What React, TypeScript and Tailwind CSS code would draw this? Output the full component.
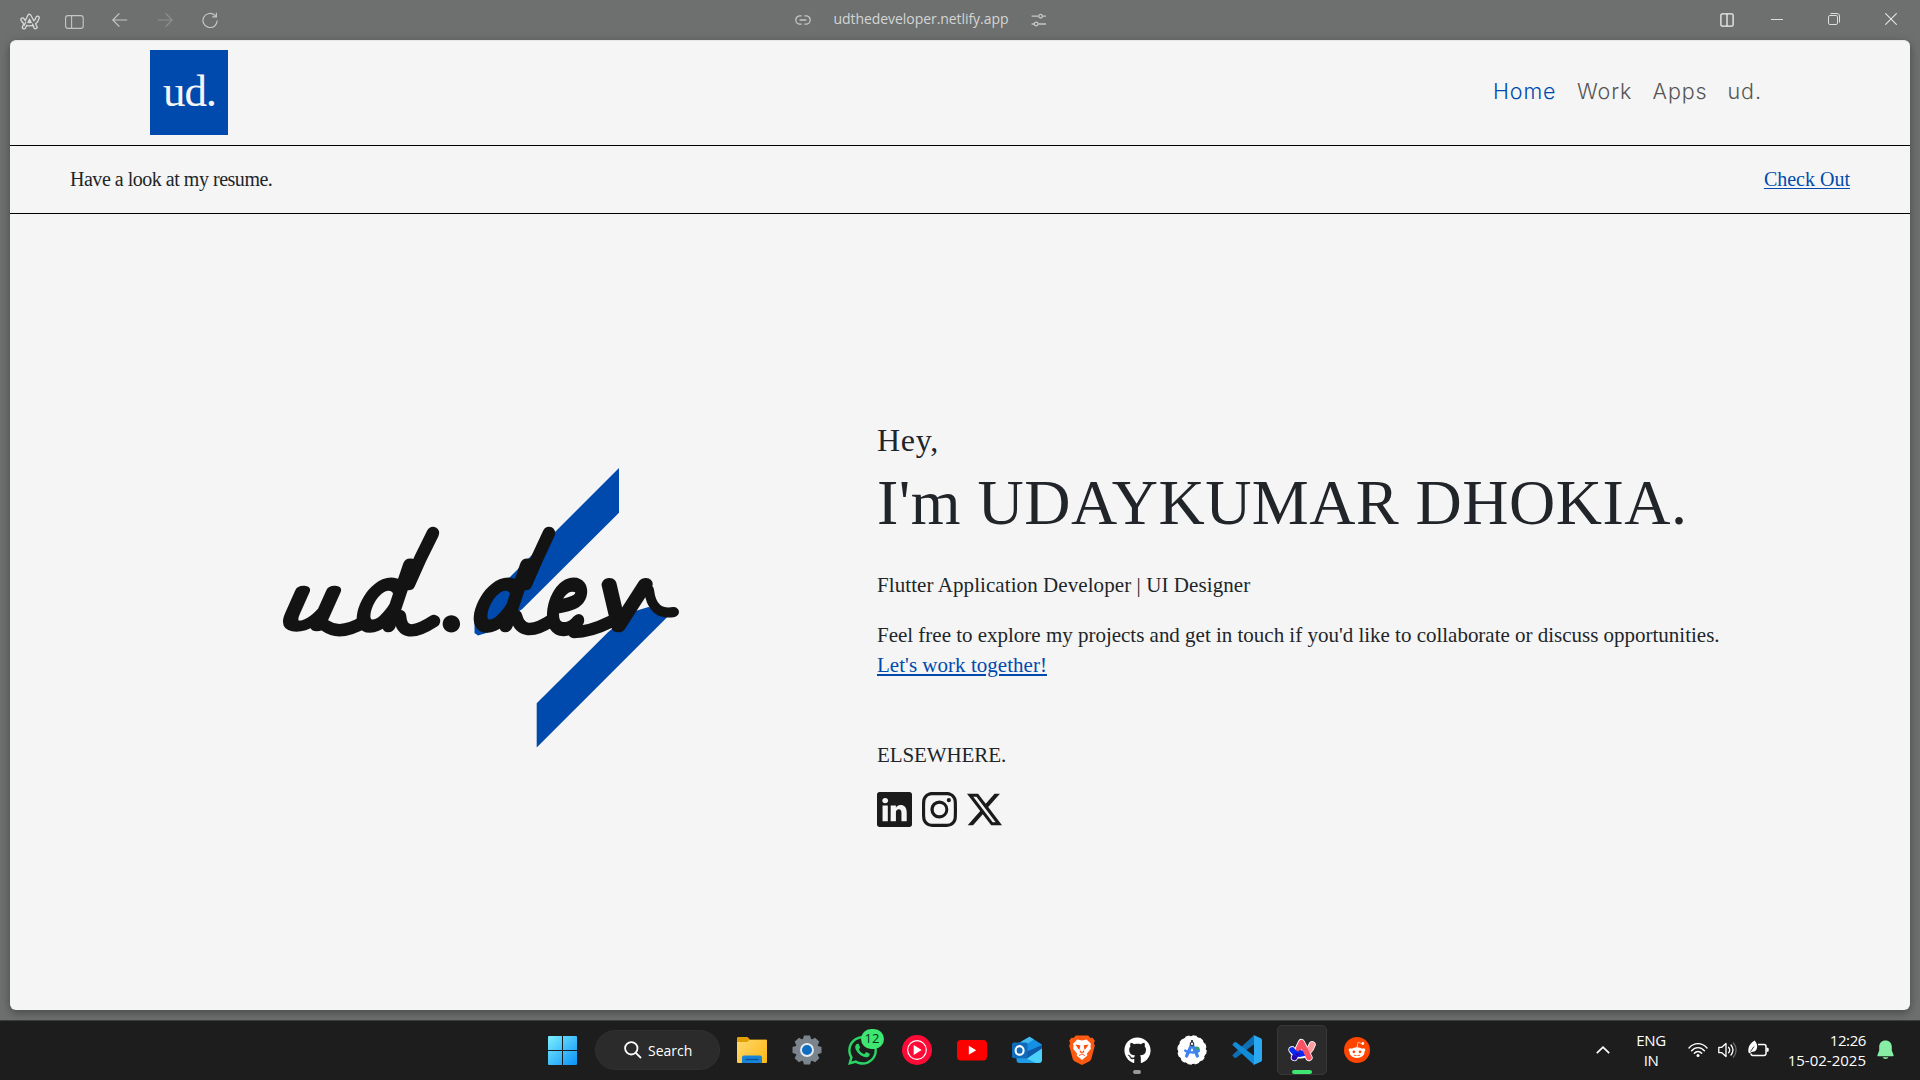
import type { ReactNode } from "react";
import { BsInstagram, BsLinkedin, BsTwitterX } from "react-icons/bs";
import { FaGithub, FaRedditAlien, FaWhatsapp } from "react-icons/fa";

const serif = "font-['Liberation_Serif',serif]";
const ui = "font-['Open_Sans','Noto_Sans',sans-serif]";

/* ---------- browser toolbar ---------- */

function ArcOutline() {
  return (
    <svg viewBox="0 0 20 17" className="h-[17px] w-5">
      <g fill="none" strokeLinecap="round" strokeLinejoin="round">
        <g stroke="#d8d9d8" strokeWidth="4.6">
          <path d="M2.6 6.6C4.6 10.8 10 13 14.6 9.4C16.4 8 17.2 6.4 17.6 4.8" />
          <path d="M4 14.2L9.4 3L15.4 14" />
        </g>
        <g stroke="#6e706f" strokeWidth="2">
          <path d="M2.6 6.6C4.6 10.8 10 13 14.6 9.4C16.4 8 17.2 6.4 17.6 4.8" />
          <path d="M4 14.2L9.4 3L15.4 14" />
        </g>
        <path stroke="#d8d9d8" strokeWidth="1.2" d="M8 9.4l1.5-3l1.4 3zM5.6 9.4l-1.6 3.4M12.4 11l1.4 2.4" />
      </g>
    </svg>
  );
}

function TopBar() {
  return (
    <header className="flex h-10 shrink-0 items-start text-[#c4c6c5]">
      <div className="flex w-[795px] items-start pl-5">
        <div className="w-[45px] pt-[13px]">
          <ArcOutline />
        </div>
        <svg viewBox="0 0 19 14" className="mt-[15px] h-[14px] w-[19px]" fill="none" stroke="currentColor" strokeWidth="1.1">
          <rect x="0.6" y="0.6" width="17.6" height="12.8" rx="2.4" />
          <path d="M6.6 0.6V13.4" />
        </svg>
        <svg viewBox="0 0 16 14" className="mt-[13px] ml-7 h-[14px] w-4" fill="none" stroke="currentColor" strokeWidth="1.2">
          <path d="M15.2 7H0.8M7.4 0.4L0.8 7L7.4 13.6" />
        </svg>
        <svg viewBox="0 0 16 14" className="mt-[13px] ml-[29px] h-[14px] w-4 text-[#8f9190]" fill="none" stroke="currentColor" strokeWidth="1.2">
          <path d="M0.8 7H15.2M8.6 0.4L15.2 7L8.6 13.6" />
        </svg>
        <svg viewBox="0 0 16 16" className="mt-3 ml-[29px] size-4" fill="none" stroke="currentColor" strokeWidth="1.2">
          <path d="M15.2 8.6A7.1 7.1 0 1 1 13 3.4L14.4 4.8M14.4 0.8V4.9H10.2" />
        </svg>
      </div>
      <div className="flex items-start">
        <svg viewBox="0 0 16 10" className="mt-[15px] h-[10px] w-4" fill="none" stroke="currentColor" strokeWidth="1.3">
          <path d="M6.6 0.8H5a4.2 4.2 0 0 0 0 8.4h1.6M9.4 0.8H11a4.2 4.2 0 0 1 0 8.4H9.4M4.6 5h6.8" />
        </svg>
        <span className={`${ui} mt-[9px] ml-[22.5px] w-[175px] whitespace-nowrap text-[14px] leading-[20px] tracking-[-0.06px] text-[#d3d5d4]`}>
          udthedeveloper.netlify.app
        </span>
        <svg viewBox="0 0 16 14" className="mt-[13px] ml-[22.5px] h-[14px] w-4" fill="none" stroke="currentColor" strokeWidth="1.3">
          <path d="M0.6 3.2h7M11.6 3.2H15M0.6 11h2.6M7.2 11H15" />
          <circle cx="9.6" cy="3.2" r="1.8" />
          <circle cx="5.2" cy="11" r="1.8" />
        </svg>
      </div>
      <div className="flex flex-1 items-start justify-end pr-[23px]">
        <svg viewBox="0 0 14 14" className="mt-[13px] size-[14px] text-[#f0f0f0]" fill="none" stroke="currentColor" strokeWidth="1.3">
          <rect x="0.9" y="0.9" width="12.2" height="12.2" rx="1.4" />
          <path d="M7 1v12" />
        </svg>
        <div className="mt-[19px] ml-[37px] h-px w-3 bg-[#dcdddc]" />
        <svg viewBox="0 0 12 12" className="mt-[13px] ml-[45px] size-3" fill="none" stroke="#dcdddc" strokeWidth="1">
          <rect x="0.5" y="2.5" width="9" height="9" rx="1.4" />
          <path d="M2.5 0.5H9a2.5 2.5 0 0 1 2.5 2.5V9.5" />
        </svg>
        <svg viewBox="0 0 12 12" className="mt-[13px] ml-[45px] size-3" fill="none" stroke="#e4e5e4" strokeWidth="1.1">
          <path d="M0.3 0.3L11.7 11.7M11.7 0.3L0.3 11.7" />
        </svg>
      </div>
    </header>
  );
}

/* ---------- web page ---------- */

function SiteNav() {
  return (
    <div className="flex h-[105px] shrink-0 items-start justify-between border-b border-black pt-[9px] pr-[145px] pl-[140px]">
      <div className={`${serif} flex h-[85px] w-[78px] items-center bg-[#004aad] pl-[13px] text-[45px] leading-[85px] tracking-[-1.1px] text-[#f5f5f5]`}>
        <span className="-mt-[3px]">ud.</span>
      </div>
      <nav className="mt-[26px] flex font-['Inter',sans-serif] text-[21.5px] leading-[31px] font-[350] tracking-[0.9px] text-[#555555]">
        <a className="w-[84px] text-[#004aad]">Home</a>
        <a className="w-[75.5px]">Work</a>
        <a className="w-[75px]">Apps</a>
        <a className="w-[37.5px]">ud.</a>
      </nav>
    </div>
  );
}

function BrandMark() {
  return (
    <svg viewBox="0 0 440 320" className="mt-[226px] ml-[250px] h-[320px] w-[440px] shrink-0">
      <g fill="#004aad">
        <path d="M359 28V72.7L262 169.3L248 178L236 190L218 195.6L214.5 193V172.5Z" />
        <path d="M276.7 263.3L348 192.3L372 172L388.5 167L409.3 175L276.7 307.4Z" />
      </g>
      <g
        fill="#131313"
        stroke="#131313"
        strokeWidth="12.5"
        strokeLinejoin="round"
        strokeLinecap="round"
        fontFamily="Lato, sans-serif"
        fontStyle="italic"
        fontWeight="100"
        fontSize="85"
      >
        <text transform="translate(22 186) skewX(-16) scale(1.12 0.84)">u</text>
        <text transform="translate(97 186) skewX(-12)">d</text>
        <text x="184.5" y="189" fontWeight="700" fontSize="75" strokeWidth="6">.</text>
        <text transform="translate(214 186) skewX(-12)">d</text>
        <text transform="translate(288 189) skewX(-4) scale(0.9 1.06)">e</text>
        <text transform="translate(341 186) skewX(-4) scale(1.1 1)">v</text>
        {/* swashes that tie the signature together */}
        <g fill="none">
          <path d="M66 186Q80 196 104 182" />
          <path d="M149 144Q160 118 173 93" />
          <path d="M140 176Q142 202 174 181" />
          <path d="M266 144Q277 118 289 93" />
          <path d="M256 176Q262 200 292 180" />
          <path d="M314 192Q330 192 350 182" />
          <path strokeWidth="10" d="M389 150Q392 176 414 172" />
        </g>
      </g>
    </svg>
  );
}

function Hero() {
  return (
    <main className="flex flex-1 items-start">
      <BrandMark />
      <section className={`${serif} mt-[207px] ml-[177px] text-[21px] leading-[30px] text-[#212529]`}>
        <p className="text-[32px] leading-[38px] tracking-[0.7px]">Hey,</p>
        <h1 className="mt-[5px] text-[64px] leading-[77px] tracking-[0.48px] whitespace-nowrap">I'm UDAYKUMAR DHOKIA.</h1>
        <p className="mt-[29px] tracking-[0.08px]">Flutter Application Developer | UI Designer</p>
        <p className="mt-5 whitespace-nowrap tracking-[-0.01px]">
          Feel free to explore my projects and get in touch if you'd like to collaborate or discuss opportunities.
          <br />
          <a className="tracking-[0.03px] text-[#004aad] underline decoration-2 underline-offset-2">Let's work together!</a>
        </p>
        <p className="mt-[60px] tracking-[-0.1px]">ELSEWHERE.</p>
        <div className="mt-[22px] flex gap-[10px] text-[#1b1b1b]">
          <BsLinkedin size={35} />
          <BsInstagram size={35} />
          <BsTwitterX size={35} />
        </div>
      </section>
    </main>
  );
}

/* ---------- taskbar icons ---------- */

const WindowsIcon = () => (
  <svg viewBox="0 0 29 29" className="size-[29px]">
    <defs>
      <linearGradient id="win" x1="0" y1="0" x2="29" y2="29" gradientUnits="userSpaceOnUse">
        <stop stopColor="#7cf0ff" />
        <stop offset="1" stopColor="#0a90f8" />
      </linearGradient>
    </defs>
    <path fill="url(#win)" d="M0 1a1 1 0 0 1 1-1h13v14H0zM15 0h13a1 1 0 0 1 1 1v13H15zM0 15h14v14H1a1 1 0 0 1-1-1zM15 15h14v13a1 1 0 0 1-1 1H15z" />
  </svg>
);

const FolderIcon = () => (
  <svg viewBox="0 0 30 30" className="size-[30px]">
    <defs>
      <linearGradient id="fold" x1="0" y1="4" x2="30" y2="28" gradientUnits="userSpaceOnUse">
        <stop stopColor="#ffd970" />
        <stop offset="1" stopColor="#fdb813" />
      </linearGradient>
    </defs>
    <path fill="#e0a006" d="M0 3a1 1 0 0 1 1-1h9.5L13 4.6h16a1 1 0 0 1 1 1V12H0z" />
    <path fill="url(#fold)" d="M0 7h10l2.6-2H29a1 1 0 0 1 1 1v21a1 1 0 0 1-1 1H1a1 1 0 0 1-1-1z" />
    <path fill="#1683d8" d="M5 28v-5.500a2 2 0 0 1 2-2h16a2 2 0 0 1 2 2V28z" />
    <path stroke="#0b4f92" strokeWidth="1.3" d="M8.500 24.500h13" />
  </svg>
);

const SettingsIcon = () => (
  <svg viewBox="0 0 30 30" className="size-[30px]">
    <g fill="#7b848c">
      <circle cx="15" cy="15" r="11.500" />
      {[0, 45, 90, 135].map((a) => (
        <path key={a} transform={`rotate(${a} 15 15)`} d="M12 0.500h6l1.600 5v19l-1.600 5h-6l-1.600-5v-19z" />
      ))}
    </g>
    <circle cx="15" cy="15" r="6" fill="#0f6cc0" stroke="#e6ebef" strokeWidth="1.900" />
  </svg>
);

const WhatsAppIcon = () => (
  <div className="relative">
    <FaWhatsapp size={33} color="#2bd565" />
    <span className={`${ui} absolute -top-[5px] left-[15px] flex h-5 w-[23px] items-center justify-center rounded-full bg-[#3ee672] text-[13px] leading-none text-[#10301a]`}>
      12
    </span>
  </div>
);

const YouTubeMusicIcon = () => (
  <svg viewBox="0 0 30 30" className="size-[30px]">
    <circle cx="15" cy="15" r="15" fill="#ff0a36" />
    <circle cx="15" cy="15" r="9.300" fill="none" stroke="#fff" strokeWidth="1.200" />
    <path fill="#fff" d="M11.700 10l8 5l-8 5z" />
  </svg>
);

const YouTubeIcon = () => (
  <svg viewBox="0 0 30 30" className="size-[30px]">
    <rect y="5" width="30" height="20.400" rx="4" fill="#fe0000" />
    <path fill="#fff" d="M11.800 10.700l7.400 4.500l-7.400 4.500z" />
  </svg>
);

const OutlookIcon = () => (
  <svg viewBox="0 0 30 30" className="size-[30px]">
    <path fill="#1590e2" d="M5 9L17.500 1.800L30 9.500V20H5z" />
    <path fill="#42b8ee" d="M9 6.800L17.500 1.800L22 4.600L10 12z" />
    <path fill="#0f57a8" d="M30 10V16L14 24V17z" />
    <path fill="#4bd0fa" d="M30 13.500V25a3 3 0 0 1-3 3H8z" />
    <path fill="#1f9be6" d="M4.500 19L24 28H7.500a3 3 0 0 1-3-3z" />
    <rect y="7.600" width="15.600" height="15.600" rx="2" fill="#0f6cbd" />
    <ellipse cx="7.600" cy="15.400" rx="4" ry="4.300" fill="none" stroke="#fff" strokeWidth="2.100" />
  </svg>
);

const BraveIcon = () => (
  <svg viewBox="0 0 26 30" className="h-[30px] w-[26px]">
    <defs>
      <linearGradient id="brv" x1="0" y1="0" x2="26" y2="0">
        <stop stopColor="#ff5a12" />
        <stop offset="1" stopColor="#ff2208" />
      </linearGradient>
    </defs>
    <path fill="url(#brv)" d="M7 0.500h12l2.600 2.600l2-0.300l2.200 3l-0.900 2.400l0.900 2.600l-3.400 12.600c-0.400 1.400-1.200 2.400-2.400 3.200L13 30l-7-3.400c-1.200-0.800-2-1.800-2.400-3.200L0.200 10.800l0.900-2.600L0.200 5.800l2.200-3l2 0.300z" />
    <path fill="#fff" d="M8.400 4.600L13 5.600l4.600-1L22 8.800l-0.600 2.400l0.600 2.200l-4.200 5.400l0.600 1.600L13 25l-5.400-4.600l0.600-1.600L4 13.400l0.600-2.200L4 8.800z" />
    <path fill="#ff4a12" d="M6.400 9.600l4.600 0.600l0.400 0.600l-0.800 2.600l2.400 4.400l2.400-4.400l-0.800-2.600l0.400-0.600l4.600-0.600l-3 4.400l-2.600 1l1.600 2l-2.600 1.600l-2.600-1.600l1.600-2l-2.600-1z" />
    <path stroke="#ff4a12" strokeWidth="0.900" fill="none" d="M10 20.600l3-1.600l3 1.600" />
  </svg>
);

const AndroidStudioIcon = () => (
  <svg viewBox="0 0 30 30" className="size-[30px]">
    <circle cx="15" cy="15" r="14" fill="#fff" stroke="#fff" strokeWidth="1.500" strokeDasharray="4.400 2.930" />
    <circle cx="19.500" cy="14.800" r="3.300" fill="#34a062" />
    <g fill="none" stroke="#3f82f0" strokeLinecap="round">
      <path strokeWidth="3.200" d="M14.300 10.500L9.600 21M15.700 10.500L20.400 21" />
      <path strokeWidth="2.400" d="M8.200 15.600C11 18 19 18 21.800 15.800" />
    </g>
    <path stroke="#3b4348" strokeWidth="2" d="M15 5v2" />
    <circle cx="15" cy="8.900" r="1.700" fill="#fff" stroke="#3b4348" strokeWidth="1.300" />
  </svg>
);

const VSCodeIcon = () => (
  <svg viewBox="0 0 30 30" className="size-[30px]">
    <path fill="#0e6fb5" d="M22 0.300L1 19.500a1.200 1.200 0 0 0 0 1.800l1.500 1.400a1.300 1.300 0 0 0 1.700 0L23 8.500z" />
    <path fill="#128bd6" d="M22 29.700L1 10.500a1.200 1.200 0 0 1 0-1.800l1.500-1.400a1.300 1.300 0 0 1 1.700 0L23 21.500z" />
    <path fill="#2aa8f2" d="M22.200 0.200l6.600 3A2 2 0 0 1 30 5v20a2 2 0 0 1-1.200 1.800l-6.600 3a1.800 1.800 0 0 1-1.500-0.200c0.800 0.500 1.300 0 1.300-0.900V1.300c0-0.900-0.500-1.400-1.300-0.900a1.800 1.800 0 0 1 1.500-0.200z" />
  </svg>
);

const ArcIcon = () => (
  <svg viewBox="0 0 28 24" className="h-6 w-7">
    <g fill="none" strokeLinecap="round" strokeLinejoin="round">
      <g stroke="#fff" strokeWidth="7.200">
        <path d="M4 11.800C7 17.600 14.500 19 20 13.500C22 11.500 23.500 9 24.200 6.600" />
        <path d="M6.400 19.600L13.400 4.600L21 19.600" />
      </g>
      <g strokeWidth="5.500">
        <path stroke="#ff9c9f" d="M18.500 14.800C21.500 12.500 23.400 9.500 24.200 6.600" />
        <path stroke="#2a06a8" d="M8.500 15L6.400 19.600" />
        <path stroke="#0a2af0" d="M4 11.800C6.500 15.800 11 17 15.500 15.500" />
        <path stroke="#f95264" d="M10.600 10.600L13.400 4.600L21 19.600" />
      </g>
      <path fill="#0a2af0" d="M8.400 16.500L11.500 12L14.500 12.500L16 16.800C13 18 10.500 17.600 8.400 16.500z" />
      <path fill="#2106ba" d="M6.500 14.600L12 15.800L9.500 19z" />
    </g>
  </svg>
);

const RedditIcon = () => (
  <div className="flex size-[26px] items-center justify-center rounded-full bg-[#ff4500]">
    <FaRedditAlien size={18} color="#fff" />
  </div>
);

function Cell({ children, mark }: { children: ReactNode; mark?: "idle" | "active" }) {
  return (
    <div
      className={
        mark === "active"
          ? "relative flex size-[50px] items-center justify-center rounded-[5px] border border-[#383838] bg-[#2b2b2b]"
          : "relative flex size-[50px] items-center justify-center"
      }
    >
      {children}
      {mark === "idle" && <span className="absolute bottom-[1px] h-1 w-2 rounded-full bg-[#999999]" />}
      {mark === "active" && <span className="absolute bottom-0 h-1 w-5 rounded-full bg-[#3ee672]" />}
    </div>
  );
}

function Tray() {
  return (
    <div className={`${ui} ml-auto flex items-center text-[15px] leading-5 text-white`}>
      <svg viewBox="0 0 14 8" className="h-2 w-[14px]" fill="none" stroke="#fff" strokeWidth="1.700">
        <path d="M0.800 7.200L7 1.200L13.200 7.200" />
      </svg>
      <div className="ml-[25px] w-[32px] text-center tracking-[-0.4px]">
        <div>ENG</div>
        <div>IN</div>
      </div>
      <svg viewBox="0 0 20 16" className="ml-[21px] h-4 w-5" fill="none" stroke="#fff" strokeWidth="1.400" strokeLinecap="round">
        <path d="M1 6C6 0.200 14 0.200 19 6M3.600 8.800C7.200 4.600 12.800 4.600 16.400 8.800M6.300 11.300C8.400 8.900 11.600 8.900 13.700 11.300" />
        <circle cx="10" cy="13.600" r="1.500" fill="#fff" stroke="none" />
      </svg>
      <svg viewBox="0 0 20 18" className="ml-[10px] h-[18px] w-5" fill="none" stroke="#fff" strokeWidth="1.300" strokeLinejoin="round" strokeLinecap="round">
        <path d="M0.800 6.300h3L8 2.500v13L3.800 11.700h-3z" />
        <path d="M10.600 6.300C12 8 12 10 10.600 11.700M13 4C15.400 7 15.400 11 13 14" />
        <path stroke="#6a6a6a" d="M15.400 2C19 6 19 12 15.400 16" />
      </svg>
      <svg viewBox="0 0 21 18" className="-mt-[2px] ml-[10px] h-[18px] w-[21px]" fill="none" stroke="#fff" strokeWidth="1.500">
        <path d="M10 4.500h6a2 2 0 0 1 2 2v6.500a2 2 0 0 1-2 2.500H5a2 2 0 0 1-2-2" />
        <path stroke="none" fill="#fff" d="M18.500 7.800h1.200a1 1 0 0 1 1 1v1.900a1 1 0 0 1-1 1h-1.200zM6.500 0.500C9 3 10 6.500 8.500 9.500C7.400 11.300 5.500 12 3.300 12L2 13.500L0.500 12.600C0 8.500 0.500 4.500 6.500 0.500z" />
        <path strokeWidth="0.900" stroke="#1d1d1d" d="M2.500 11.500L6 6.500" />
      </svg>
      <div className="ml-[17px] w-20 text-right">
        <div className="tracking-[-0.4px]">12:26</div>
        <div>15-02-2025</div>
      </div>
      <svg viewBox="0 0 17 20" className="mr-[26px] ml-[11px] h-5 w-[17px]" fill="#86efa5">
        <path d="M8.500 0.500C4.600 0.500 2.200 3.200 2.200 6.800V10.500L0.400 15.200C0.300 15.700 0.600 16.200 1.200 16.200H15.800C16.400 16.200 16.700 15.700 16.600 15.200L14.800 10.500V6.800C14.800 3.200 12.400 0.500 8.500 0.500z" />
        <path d="M5.600 17.200h5.800a3 2.400 0 0 1-5.800 0z" />
      </svg>
    </div>
  );
}

function Taskbar() {
  return (
    <footer className="flex h-[60px] shrink-0 items-center border-t border-[#3b3d3c] bg-[#1d1d1d] pb-px">
      <div className="ml-[537px] flex items-center">
        <Cell>
          <WindowsIcon />
        </Cell>
        <div className={`${ui} ml-2 flex h-10 w-[125px] items-center rounded-full border border-[#303030] bg-[#2b2b2b] pl-[28px] text-[14px] text-white`}>
          <svg viewBox="0 0 18 18" className="mr-[6px] size-[18px]" fill="none" stroke="#fff" strokeWidth="1.800">
            <circle cx="7.300" cy="7.300" r="6.200" />
            <path d="M11.800 11.800L17 17" />
          </svg>
          <span>Search</span>
        </div>
        <div className="ml-[7px] flex gap-[5px]">
          <Cell><FolderIcon /></Cell>
          <Cell><SettingsIcon /></Cell>
          <Cell><WhatsAppIcon /></Cell>
          <Cell><YouTubeMusicIcon /></Cell>
          <Cell><YouTubeIcon /></Cell>
          <Cell><OutlookIcon /></Cell>
          <Cell><BraveIcon /></Cell>
          <Cell mark="idle"><FaGithub size={27} color="#fff" /></Cell>
          <Cell><AndroidStudioIcon /></Cell>
          <Cell><VSCodeIcon /></Cell>
          <Cell mark="active"><ArcIcon /></Cell>
          <Cell><RedditIcon /></Cell>
        </div>
      </div>
      <Tray />
    </footer>
  );
}

export default function App() {
  return (
    <div className="flex h-[1080px] w-[1920px] flex-col overflow-hidden bg-[#6e706f]">
      <TopBar />
      <div className="mx-[10px] mb-[10px] flex min-h-0 flex-1 flex-col overflow-hidden rounded-[6px] border-t border-[#e6e6e6] bg-[#f5f5f5] shadow-[0_3px_10px_rgba(0,0,0,0.35)]">
        <SiteNav />
        <div className={`${serif} flex h-[68px] shrink-0 items-start justify-between border-b border-black px-[60px] pt-[18px] text-[20px] leading-[30px] text-[#212529]`}>
          <span className="tracking-[-0.48px]">Have a look at my resume.</span>
          <a className="text-[#004aad] underline decoration-1 underline-offset-2">Check Out</a>
        </div>
        <Hero />
      </div>
      <Taskbar />
    </div>
  );
}
